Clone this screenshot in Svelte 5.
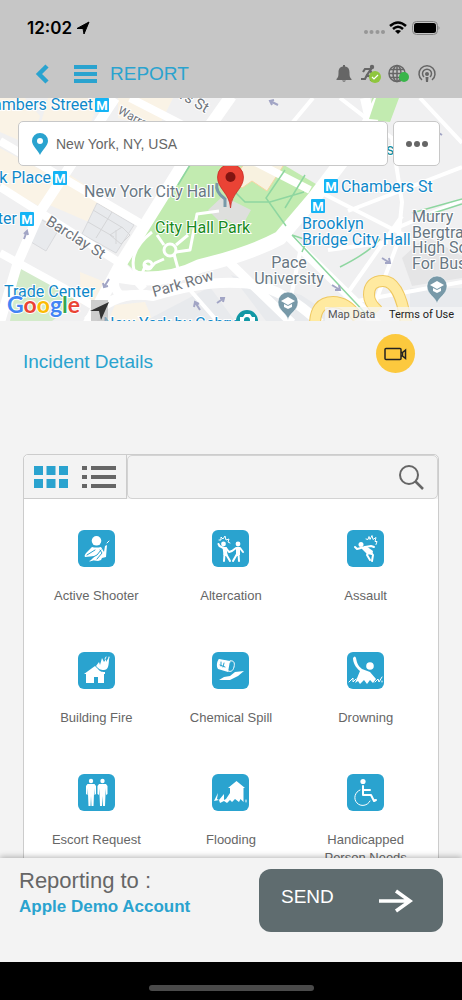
<script lang="ts">
    type Incident = {
        name: string;
        heads?: number[][];
        fill?: string;
        line?: string;
        thin?: string;
        cut?: string;
    };

    // Glyphs are drawn on a 37x37 tile
    const incidents: Incident[] = [
        {
            name: 'Active Shooter',
            heads: [[18.5, 10.8, 4.8]],
            fill: 'M14 17q4 1 9 0l3 5 1-6 2-1-1 12-4 1-1 2-3 1-7-1 4-4-10 1c-1-1 0-3 2-5z',
            thin: 'M29 13l2-2M12 31l3-1',
            cut: 'M9 25l8-5M13 28l6-3 4-5M19 29l5-6-2-3'
        },
        {
            name: 'Altercation',
            heads: [[11.5, 14, 2.4], [26, 14, 2.4]],
            line: 'M11.5 18l-4-2-1-2M14 18l3 4 3-1 4-3M28 18l3 4M12.5 24l-.5 7M14 24l4 7M25 24l-4 7M26.5 24l.5 7',
            fill: 'M10.500 17h4l1 8h-4zM24 17h4v8h-4z',
            thin: 'M7 10l2 0 0-3 2 2 2-3 1 4 3-1-1 3 2 1'
        },
        {
            name: 'Assault',
            heads: [[14, 14.5, 2.5]],
            fill: 'M13 17l6-1 7 5-1 4-5-1z',
            line: 'M14 18l-4 1-2-2M18 17l6-1 3 1M23 21l3 4-1 6M21 23l-1 2 3 5',
            thin: 'M19 9l2 .5 1-3 1 3 2-4 1 4 3-2-1 4 2 0-1 3'
        },
        {
            name: 'Building Fire',
            fill: 'M6 22l11-8 3 3c2 3 5 3 7 3v2h-1v9h-6v-6h-4v6H8v-9zM18 14l3-4 1 3 2-7 2 4 2-3v3l3-5c0 9-1 13-5 13-4 0-5-1-8-4z',
            thin: 'M31 5v1M28 5l-1 2'
        },
        {
            name: 'Chemical Spill',
            fill: 'M7 7l11 2-2 11-10-3c-2-3-1-8 1-10zM7 28l5-3 6-1 5-4 9-1-6 5-8 4z',
            thin: 'M18 9c4-1 5 2 4 6s-3 5-6 4c-2-3 0-8 2-10M7 8l11 2',
            cut: 'M9 10v4M12 11l-1 4M8 13l5 2'
        },
        {
            name: 'Drowning',
            heads: [[23, 14, 3.8]],
            fill: 'M6 6q2-3 3 0c1 5 2 8 6 11l8 3 6 7-3 4-3-3-3 4-3-4-4 4-2-3-3 2 5-12c-5-4-7-9-7-13z',
            thin: 'M2 30l4-4v4l3-3M28 30l3-3 1 3 3-5M35 30v-1'
        },
        {
            name: 'Escort Request',
            heads: [[13, 7, 2.2], [24.5, 7, 2.2]],
            fill: 'M9.500 10h7l1.500 2v8l-1.500 1V14l-.5 6-.5 12h-2l-.5-10-.5 10h-2l-.5-12-.5-6v7l-1.500-1v-8zM21 10h7l1.500 2v8l-1.500 1V14l-.5 6-.5 12h-2l-.5-10-.5 10h-2l-.5-12-.5-6v7l-1.500-1v-8z'
        },
        {
            name: 'Flooding',
            fill: 'M16 14l8.500-7 8.500 7h-1.500v14l-3-3-1.500 3-4-3-3 3-2-2V14zM2 27l4-8-1 6 2 1 5-6v6l2-1 4-6v7l-3 3-3-2-4 2-1-3z',
            thin: 'M34 28v-2'
        },
        {
            name: 'Handicapped Person Needs Assistance',
            heads: [[16, 7.5, 2.6]],
            line: 'M16 12v9h8l3 6 2-1M17 16h6',
            thin: 'M13 16a8 8 0 1 0 10 11'
        }
    ];

    let view = $state('grid');
    let address = $state('New York, NY, USA');
    let query = $state('');
</script>

{#snippet station(x: number, y: number)}
    <rect {x} {y} width="14" height="14" rx="1" fill="#14b4f5" />
    <text x={x + 7} y={y + 12} class="metro">M</text>
{/snippet}

{#snippet school(x: number, y: number)}
    <path d="M{x} {y + 19}c-1-7-10-9-10-18a10 10 0 0 1 20 0c0 9-9 11-10 18z" fill="#7899a8" stroke="#fff" stroke-width=".5" />
    <path d="M{x - 7} {y}l7-4 7 4-7 4zM{x - 4} {y + 3}l4 2 4-2v3l-4 2-4-2z" fill="#fff" />
{/snippet}

<div class="screen">
    <header>
        <div class="status">
            <div class="clock">
                <span>12:02</span>
                <svg width="14" height="14" viewBox="0 0 14 14"><path d="M1 7.500L13 1 8 13 7 7.500z" stroke="#000" /></svg>
            </div>
            <svg width="78" height="16" viewBox="0 0 78 16">
                <g fill="#979797">
                    <circle cx="4" cy="12" r="2" /><circle cx="9.500" cy="12" r="2" />
                    <circle cx="15.500" cy="12" r="2" /><circle cx="21" cy="12" r="2" />
                </g>
                <g fill="none" stroke="#000" stroke-width="2.500">
                    <path d="M28 6q8-7 16 0M31 9q5-4.500 10 0" />
                </g>
                <path d="M33 11q3-2 6 0l-3 3z" />
                <rect x="50.500" y="1.500" width="25" height="13" rx="4" fill="none" stroke="#858585" />
                <rect x="52" y="3" width="22" height="10" rx="2.500" />
                <path d="M76.500 6q2 2 0 4z" fill="#858585" />
            </svg>
        </div>
        <nav>
            <button class="plain" aria-label="Back">
                <svg width="14" height="20" viewBox="0 0 14 20"><path d="M12 2L4 10l8 8" fill="none" stroke="#2aa3cf" stroke-width="4.500" /></svg>
            </button>
            <button class="plain menu" aria-label="Menu">
                <svg width="23" height="20" viewBox="0 0 23 20"><path d="M0 3h23M0 10h23M0 17h23" stroke="#2aa3cf" stroke-width="4" /></svg>
            </button>
            <h1>REPORT</h1>
            <div class="tools">
                <button class="plain" aria-label="Alerts">
                    <svg width="20" height="20" viewBox="0 0 20 20" fill="#666"><path d="M9 1h2v1.500c3.500 .5 4.500 3 4.500 6 0 4 .5 5 2 6.500v1h-15v-1c1.500-1.500 2-2.500 2-6.500 0-3 1-5.500 4.500-6zM8 16.500h4q-2 2.500-4 0z" /></svg>
                </button>
                <button class="plain" aria-label="Safety status">
                    <svg width="20" height="20" viewBox="0 0 20 20">
                        <circle cx="11" cy="3" r="2.200" fill="#666" />
                        <path d="M2 8l2-3h6l-4 6 4 2v4M6 11l-2 4H0M9 6l2 4h3" fill="none" stroke="#666" stroke-width="2.200" />
                        <circle cx="14" cy="13" r="6" fill="#8fc63e" />
                        <path d="M11 13l2 2 4-4" fill="none" stroke="#fff" stroke-width="1.200" />
                    </svg>
                </button>
                <button class="plain" aria-label="Network">
                    <svg width="22" height="20" viewBox="0 0 22 20">
                        <g fill="none" stroke="#666" stroke-width="1.500">
                            <circle cx="9" cy="9.500" r="8" /><ellipse cx="9" cy="9.500" rx="4" ry="8" />
                            <path d="M9 1v17M1 9.500h16M2 5.500h14M2 13.500h14" />
                        </g>
                        <circle cx="16" cy="13" r="5" fill="#39b54a" />
                    </svg>
                </button>
                <button class="plain" aria-label="Broadcast">
                    <svg width="20" height="20" viewBox="0 0 20 20">
                        <g fill="none" stroke="#666" stroke-width="1.500">
                            <path d="M5 16a8 8 0 1 1 10 0M7 13a4.500 4.500 0 1 1 6 0" />
                        </g>
                        <circle cx="10" cy="10" r="2" fill="#666" /><path d="M8.500 13h3l-.5 5H9z" fill="#666" />
                    </svg>
                </button>
            </div>
        </nav>
    </header>

    <section class="map">
        <svg class="tiles" viewBox="0 98 462 223" preserveAspectRatio="xMidYMid slice">
            <rect y="98" width="462" height="223" fill="#f0f0f1" />
            <g fill="#faf3e6">
                <path d="M0 98h25l15 18-8 30L0 132zM48 98h52l-20 55-42-20zM0 148l60 32-18 28-42-24zM70 175l55 36-20 18-58-25zM118 98h55l-15 30-40-10zM80 272l25 10-8 22-16 0zM115 305l30-3 8 19h-45z" />
            </g>
            <g fill="#c2ebb0">
                <path d="M188 165h96l37 22-35 40-16 13-40 13-56 25h-31l-18-16z" />
                <path d="M372 98h27l-9 24-22-2z" />
                <path d="M20 266l56 28-4 12-20 15H10z" fill="#d3ebca" />
            </g>
            <path d="M245 163h40l-18 28-15-10-10 7-9-9z" fill="#f8f2e0" stroke="#f8d5a2" />
            <g fill="#e8eaed">
                <path d="M145 321l65-34 25 34zM231 275l70 20 40 26h-75zM410 288h52v33h-52z" />
                <path d="M97 203l37 22-18 28-34-19zM40 219l19 10-13 22-15-9z" stroke="#d9dadd" />
                <path d="M208 210l15-14 28 14-10 18-15-9-6 3z" fill="#dedfdd" />
                <path d="M402 258l24-22 36 20v22l-50 8z" fill="#e5e5e6" />
            </g>
            <g fill="none" stroke="#d5d6d8">
                <path d="M93 210l30 18M88 222l26 15M112 212l-16 26M110 235l12-8 8 8-9 9zM116 230v14" />
            </g>
            <g fill="none" stroke="#fff" stroke-linejoin="round">
                <path d="M0 141l140 82M0 187l120 76 24 26M0 253l62 34 30 18M130 98l180 92" stroke-width="8" />
                <path d="M115 98l-75 114-22 50-18 60" stroke-width="10" />
                <path d="M231 96l-50 71-61 98-32 60" stroke-width="12" />
                <path d="M120 276q45 8 80-10 50-12 80-28l34-40 50-66 18-34" stroke-width="14" />
                <path d="M88 321q25-32 65-25 50-15 85-13 40 0 82 40M371 124l-6-26" stroke-width="10" />
                <path d="M230 263l62 60M286 234l92 90M125 270q-18 12-5 25h26" stroke-width="9" />
                <path d="M313 98l-25 30M340 98l52 40 10 64-4 40-30 80M316 190l94 48M348 211l114-44M402 216l-55 78M300 252l-10 50M328 250l60-8M352 302l110-20M462 200l-70 30M190 290l28 32M420 98l42 45" stroke-width="4" />
                <path d="M152 232q-23 18-18 38l14 8M145 265q5 5 10-2l9-4M176 252l14-2 7-36 22-3M174 254l6 22M146 264l-5 12M157 235l7 10M176 245l12-10" stroke-width="3" />
                <circle cx="170" cy="250" r="6" stroke-width="3" />
                <circle cx="148" cy="265" r="4" stroke-width="3" />
            </g>
            <path d="M376 98h22l-8 23-21-2z" fill="#c2ebb0" />
            <g fill="none" stroke="#8ed6a0" stroke-width="1.500">
                <path d="M231 188l14 14h25l34-10M285 170l-19 28 20 28M305 175l-20 33M190 165l-12 20M292 235l75 80M292 235l15 5-5 12M340 267q30-15 40-28M412 213l50-14M418 218l44-14" />
            </g>
            <g fill="none" stroke="#efc860" stroke-width="12">
                <path d="M315 325q0-23 18-23 14 0 25 16M378 311q-9-8-9-16 0-14 14-14 17 0 23 42" />
            </g>
            <g fill="none" stroke="#ffeaa0" stroke-width="10">
                <path d="M315 325q0-23 18-23 14 0 25 16M378 311q-9-8-9-16 0-14 14-14 17 0 23 42" />
            </g>
            <g stroke="#a2a5c5" stroke-width="2" fill="none">
                <path d="M24 239l3-8m-3 3l3-3 1 4M104 287l5-8m-6 4l1 4 4-1M278 105l-8-4m4-1l-4 1 2 4M382 258l8 5m-1-5l1 5-5 0M332 285l8 5m-1-5l1 5-5 0M434 130l8 5M200 310l-5-8m-1 5l1-5 4 2M217 303l7-5m-4 0l4 0-1 4" />
            </g>

            <g class="label transit">
                <text x="93" y="110" text-anchor="end">Chambers Street</text>
                <text x="51" y="183" text-anchor="end">Park Place</text>
                <text x="17" y="224" text-anchor="end">World Trade Center</text>
                <text x="4" y="297" class="trade">Trade Center</text>
                <text x="341" y="192">Chambers St</text>
                <text x="302" y="229">Brooklyn</text>
                <text x="302" y="245">Bridge City Hall</text>
                <text x="103" y="329">New York by Gehry</text>
                <text x="386" y="155" fill="#128c9b">se</text>
            </g>
            {@render station(95, 98)}
            {@render station(53, 171)}
            {@render station(20, 212)}
            {@render station(324, 179)}
            {@render station(311, 199)}

            <g class="label place">
                <text x="84" y="197">New York City Hall</text>
                <text x="289" y="268" text-anchor="middle">Pace</text>
                <text x="289" y="284" text-anchor="middle">University</text>
                <text x="412" y="222">Murry</text>
                <text x="412" y="238">Bergtraum</text>
                <text x="412" y="253">High School</text>
                <text x="412" y="269">For Business</text>
            </g>
            <g class="label street">
                <text transform="translate(45 224) rotate(32)">Barclay St</text>
                <text transform="translate(154 297) rotate(-16)">Park Row</text>
                <text class="small" transform="translate(117 113) rotate(28)">Warren St</text>
                <text transform="translate(179 98) rotate(30)">rs St</text>
            </g>
            <text x="155" y="233" class="label park">City Hall Park</text>

            {@render school(288, 301)}
            {@render school(437, 285)}
            <circle cx="247" cy="321" r="11" fill="#1298a5" />
            <path d="M240 317h3l2-3h5l2 3h3v6h-15z" fill="#fff" />
            <circle cx="247" cy="320" r="3" fill="#1298a5" />

            <path d="M217 183q-2 9 8 16v8" fill="none" stroke="#7899a8" stroke-width="3" />
            <path d="M230.500 208c-1-15-13-19-13-31a13 13 0 0 1 26 0c0 12-12 16-13 31z" fill="#ea4335" stroke="#c5221f" stroke-width=".7" />
            <circle cx="230.500" cy="177" r="5" fill="#811411" />

            <rect x="325" y="307" width="137" height="14" fill="#f5f5f5" opacity=".75" />
            <rect x="91" y="300" width="17" height="21" fill="#b9b9b9" opacity=".7" />
            <path d="M90 311l19-9-8 18-2-9z" fill="#333" />
            <text x="7" y="313" class="google"><tspan fill="#4285f4">G</tspan><tspan fill="#ea4335">o</tspan><tspan fill="#fbbc05">o</tspan><tspan fill="#4285f4">g</tspan><tspan fill="#34a853">l</tspan><tspan fill="#ea4335">e</tspan></text>
            <text x="328" y="318" class="credit">Map Data</text>
            <text x="389" y="318" class="credit dark">Terms of Use</text>
        </svg>

        <div class="search">
            <label class="address">
                <svg width="18" height="24" viewBox="0 0 18 24"><path d="M9 23C7 18 1 14 1 9a8 8 0 0 1 16 0c0 5-6 9-8 14z" fill="#2aa3cf" /><circle cx="9" cy="9" r="3" fill="#fff" /></svg>
                <input type="text" aria-label="Address" bind:value={address} />
            </label>
            <button class="more" aria-label="More">
                <svg width="24" height="8" viewBox="0 0 24 8" fill="#666"><circle cx="4" cy="4" r="3" /><circle cx="12" cy="4" r="3" /><circle cx="20" cy="4" r="3" /></svg>
            </button>
        </div>
    </section>

    <main>
        <div class="heading">
            <h2>Incident Details</h2>
            <button class="video" aria-label="Record video">
                <svg width="23" height="14" viewBox="0 0 23 14" fill="none" stroke="#222" stroke-width="1.500"><rect x="1" y="1.500" width="16" height="11" rx="1" /><path d="M17 5.500h1.500L21.500 3v8.500L18.500 9H17M18.500 5.500V9" /></svg>
            </button>
        </div>

        <div class="panel">
            <div class="bar">
                <div class="views">
                    <button class="plain" aria-label="Grid view" aria-pressed={view === 'grid'} onclick={() => (view = 'grid')}>
                        <svg width="34" height="24" viewBox="0 0 34 24" fill="#2aa3cf"><path d="M0 1h9v9H0zM12.500 1h9v9h-9zM25 1h9v9h-9zM0 14h9v9H0zM12.500 14h9v9h-9zM25 14h9v9h-9z" /></svg>
                    </button>
                    <button class="plain" aria-label="List view" aria-pressed={view === 'list'} onclick={() => (view = 'list')}>
                        <svg width="34" height="24" viewBox="0 0 34 24" stroke="#666" stroke-width="4"><path d="M0 3h5M9 3h25M0 12h5M9 12h25M0 21h5M9 21h25" /></svg>
                    </button>
                </div>
                <label class="filter">
                    <input type="text" aria-label="Search incidents" bind:value={query} />
                    <svg width="26" height="26" viewBox="0 0 26 26" fill="none" stroke="#666" stroke-width="2"><circle cx="11" cy="11" r="9" /><path d="M17 17l8 8" stroke-width="2.500" /></svg>
                </label>
            </div>
            <div class="grid">
                {#each incidents as incident}
                    <button class="incident">
                        <svg width="37" height="37" viewBox="0 0 37 37">
                            <rect width="37" height="37" rx="6" fill="#2aa3cf" />
                            {#each incident.heads ?? [] as [cx, cy, r]}
                                <circle {cx} {cy} {r} fill="#fff" />
                            {/each}
                            <path d={incident.fill} fill="#fff" />
                            <path d={incident.line} class="stroke" />
                            <path d={incident.thin} class="stroke thin" />
                            <path d={incident.cut} class="stroke cut" />
                        </svg>
                        <span>{incident.name}</span>
                    </button>
                {/each}
            </div>
        </div>
    </main>

    <footer>
        <div class="account">
            <p>Reporting to :</p>
            <strong>Apple Demo Account</strong>
        </div>
        <button class="send">
            <span>SEND</span>
            <svg width="36" height="24" viewBox="0 0 36 24" fill="none" stroke="#fff" stroke-width="3.500"><path d="M1 12h31M18 2l14 10-14 10" /></svg>
        </button>
    </footer>
    <div class="home"><span></span></div>
</div>

<style>
    :global(body) {
        margin: 0;
        background: #000;
    }

    .screen {
        display: flex;
        flex-direction: column;
        height: 100vh;
        overflow: hidden;
        background: #f3f3f3;
        color: #666;
        font-family: "Liberation Sans", Arial, sans-serif;
    }

    svg {
        display: block;
        flex: none;
    }

    button {
        padding: 0;
        border: 0;
        font: inherit;
        color: inherit;
        cursor: pointer;
    }

    .plain {
        background: none;
    }

    input {
        flex: 1;
        min-width: 0;
        padding: 0;
        border: 0;
        outline: 0;
        background: none;
        font: inherit;
        color: inherit;
    }

    h1, h2, p {
        margin: 0;
        font-weight: 400;
    }

    header {
        box-sizing: border-box;
        height: 98px;
        padding: 18px 22px 0 27px;
        background: #c6c6c6;
    }

    .status, nav, .clock, .tools {
        display: flex;
        align-items: center;
    }

    .status {
        justify-content: space-between;
        height: 20px;
    }

    .clock {
        gap: 4px;
        color: #000;
        font: 600 17px/20px Inter, sans-serif;
    }

    nav {
        height: 36px;
        margin-top: 18px;
        padding-left: 8px;
    }

    .menu {
        margin: 0 13px 0 25px;
    }

    h1, h2 {
        color: #2aa3cf;
        font-size: 19px;
        line-height: 22px;
    }

    .tools {
        gap: 7px;
        margin-left: auto;
        padding-right: 3px;
    }

    .map {
        position: relative;
        height: 223px;
        flex: none;
        overflow: hidden;
    }

    .tiles {
        width: 100%;
        height: 100%;
    }

    .label {
        font-family: Roboto, sans-serif;
        font-size: 16px;
        paint-order: stroke;
        stroke: #fff;
        stroke-width: 2px;
    }

    .transit {
        fill: #0f88c9;
    }

    .place {
        fill: #687783;
    }

    .street {
        fill: #70757c;
        font-size: 15px;
    }

    .small {
        font-size: 12px;
    }

    .park {
        fill: #188a20;
    }

    .metro {
        fill: #fff;
        font: 700 13px Roboto, sans-serif;
        text-anchor: middle;
    }

    .google {
        font: 700 23px Lato, sans-serif;
        paint-order: stroke;
        stroke: #fff;
        stroke-width: 2px;
    }

    .credit {
        fill: #555;
        font: 11px Roboto, sans-serif;
    }

    .dark {
        fill: #222;
    }

    .search {
        position: absolute;
        inset: 23px 22px auto 18px;
        display: flex;
        gap: 5px;
        height: 45px;
    }

    .address, .more {
        box-sizing: border-box;
        display: flex;
        align-items: center;
        border: 1px solid #c8c8c8;
        border-radius: 5px;
        background: #fff;
    }

    .address {
        flex: 1;
        gap: 7px;
        padding: 0 12px;
        font-size: 14px;
    }

    .more {
        justify-content: center;
        width: 47px;
    }

    main {
        flex: 1;
        min-height: 0;
        padding: 12px 23px 0;
        overflow: hidden;
    }

    .heading {
        display: flex;
        align-items: flex-end;
        justify-content: space-between;
        height: 40px;
        padding-right: 24px;
    }

    .video {
        display: flex;
        align-items: center;
        justify-content: center;
        width: 39px;
        height: 39px;
        border-radius: 50%;
        background: #fcc93e;
    }

    .panel {
        margin-top: 81px;
        border: 1px solid #ccc;
        border-radius: 5px;
        background: #fff;
    }

    .bar {
        display: flex;
        height: 44px;
        background: #f3f3f3;
        border-radius: 5px 5px 0 0;
    }

    .views {
        display: flex;
        align-items: center;
        gap: 14px;
        padding: 0 10px;
        border-right: 1px solid #ccc;
        border-bottom: 1px solid #ccc;
    }

    .filter {
        display: flex;
        flex: 1;
        align-items: center;
        padding: 0 13px;
        border: 1px solid #d3d3d3;
        border-radius: 5px;
    }

    .grid {
        display: grid;
        grid-template-columns: repeat(3, 1fr);
        padding: 0 5px;
    }

    .incident {
        display: flex;
        flex-direction: column;
        align-items: center;
        gap: 20px;
        min-height: 122px;
        padding: 31px 12px 0;
        background: none;
        font-size: 13px;
        line-height: 18px;
    }

    .stroke {
        fill: none;
        stroke: #fff;
        stroke-width: 2px;
        stroke-linecap: round;
        stroke-linejoin: round;
    }

    .thin {
        stroke-width: 1px;
    }

    .cut {
        stroke: #2aa3cf;
        stroke-width: 1px;
    }

    footer {
        position: relative;
        box-sizing: border-box;
        display: flex;
        justify-content: space-between;
        height: 104px;
        padding: 11px 19px 0;
        background: #f3f3f3;
        box-shadow: 0 -1px 6px rgba(0, 0, 0, 0.3);
    }

    .account p {
        font-size: 22px;
        line-height: 24px;
    }

    .account strong {
        display: block;
        margin-top: 2px;
        color: #2aa3cf;
        font-size: 17px;
        line-height: 24px;
    }

    .send {
        display: flex;
        align-items: center;
        justify-content: space-between;
        box-sizing: border-box;
        width: 184px;
        height: 63px;
        padding: 0 29px 0 22px;
        border-radius: 12px;
        background: #5f6c6f;
        color: #fff;
        font-size: 19px;
        line-height: 22px;
    }

    .send span {
        padding-bottom: 8px;
    }

    .home {
        display: flex;
        flex: none;
        justify-content: center;
        box-sizing: border-box;
        height: 38px;
        padding-top: 23px;
        background: #000;
    }

    .home span {
        width: 165px;
        height: 6px;
        border-radius: 3px;
        background: #4a4a4a;
    }
</style>
